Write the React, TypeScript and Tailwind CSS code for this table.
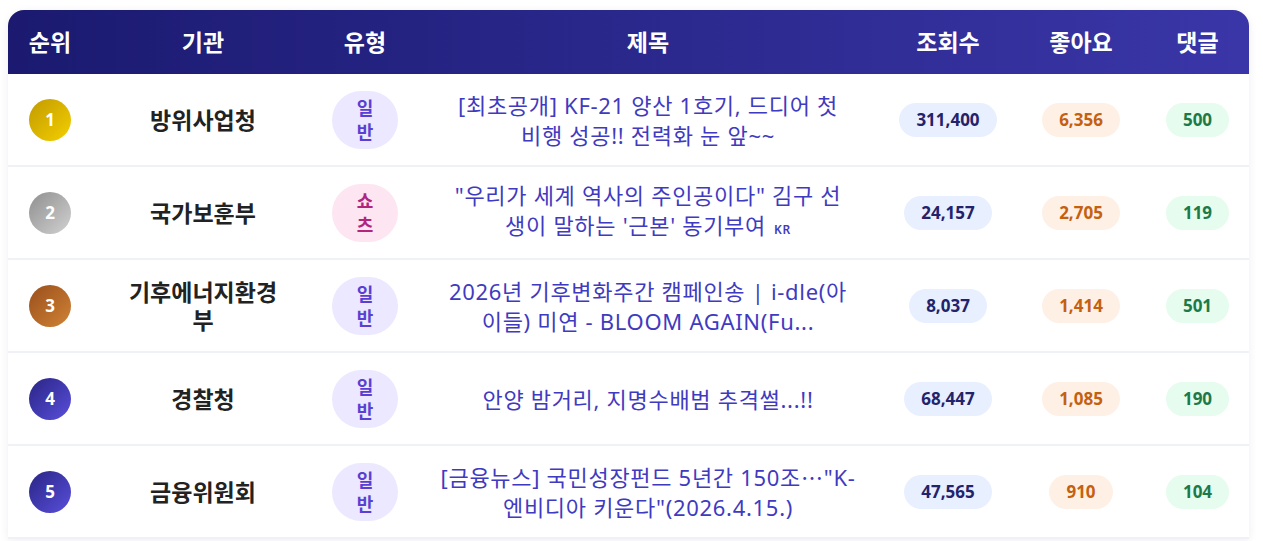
import React from "react";

type Row = {
  rank: number;
  org: string;
  type: "일반" | "쇼츠";
  title: React.ReactNode[];
  flag?: boolean;
  views: string;
  likes: string;
  comments: string;
};

// centred ellipsis, as the Korean font draws it
const Dots = () => <span className="font-['Noto_Sans_CJK_SC',sans-serif]">…</span>;

const rows: Row[] = [
  {
    rank: 1,
    org: "방위사업청",
    type: "일반",
    title: ["[최초공개] KF-21 양산 1호기, 드디어 첫", "비행 성공!! 전력화 눈 앞~~"],
    views: "311,400",
    likes: "6,356",
    comments: "500",
  },
  {
    rank: 2,
    org: "국가보훈부",
    type: "쇼츠",
    title: ["\"우리가 세계 역사의 주인공이다\" 김구 선", "생이 말하는 '근본' 동기부여"],
    flag: true,
    views: "24,157",
    likes: "2,705",
    comments: "119",
  },
  {
    rank: 3,
    org: "기후에너지환경부",
    type: "일반",
    title: ["2026년 기후변화주간 캠페인송 | i-dle(아", "이들) 미연 - BLOOM AGAIN(Fu..."],
    views: "8,037",
    likes: "1,414",
    comments: "501",
  },
  {
    rank: 4,
    org: "경찰청",
    type: "일반",
    title: ["안양 밤거리, 지명수배범 추격썰...!!"],
    views: "68,447",
    likes: "1,085",
    comments: "190",
  },
  {
    rank: 5,
    org: "금융위원회",
    type: "일반",
    title: [
      <>
        [금융뉴스] 국민성장펀드 5년간 150조
        <Dots />
        "K-
      </>,
      "엔비디아 키운다\"(2026.4.15.)",
    ],
    views: "47,565",
    likes: "910",
    comments: "104",
  },
];

const headers = ["순위", "기관", "유형", "제목", "조회수", "좋아요", "댓글"];

const cols = "grid grid-cols-[84px_222px_102px_464px_136px_130px_103px]";

// medal colours for top 3, indigo for the rest
const rankBg = (rank: number) => {
  if (rank === 1) return "bg-gradient-to-br from-[#c29a00] to-[#f3d000]";
  if (rank === 2) return "bg-gradient-to-br from-[#8f8f8f] to-[#d2d2d2]";
  if (rank === 3) return "bg-gradient-to-br from-[#9a4f1c] to-[#d08335]";
  return "bg-gradient-to-br from-[#2a2585] to-[#5a4fdc]";
};

const pill = "rounded-full px-[17px] py-[6px] text-[17px] font-bold leading-[22px]";

const App: React.FC = () => {
  return (
    <div className="min-h-screen bg-white pt-[10px] pl-2 font-['Noto_Sans','Noto_Sans_CJK_KR',sans-serif]">
      <div className="w-[1241px] rounded-t-2xl bg-white shadow-[0_2px_10px_rgba(30,30,80,0.07)]">
        {/* Header */}
        <div className={`${cols} h-[64px] items-center rounded-t-2xl bg-gradient-to-r from-[#1b1a70] to-[#3a36a8]`}>
          {headers.map((h) => (
            <div key={h} className="text-center text-[23px] font-bold text-white">
              {h}
            </div>
          ))}
        </div>

        {/* Rows */}
        {rows.map((row) => (
          <div key={row.rank} className={`${cols} h-[93px] items-center border-b-2 border-[#f0f0f7]`}>
            <div className="flex justify-center">
              <div
                className={`flex h-[42px] w-[42px] items-center justify-center rounded-full text-[17px] font-bold text-white ${rankBg(
                  row.rank
                )}`}
              >
                {row.rank}
              </div>
            </div>

            <div className="flex justify-center">
              <div className="max-w-[162px] text-center text-[23px] font-bold leading-[28px] text-[#222]">{row.org}</div>
            </div>

            <div className="flex justify-center">
              <div
                className={`flex h-[58px] w-[66px] flex-col items-center justify-center rounded-full text-[18px] font-bold leading-[24px] ${
                  row.type === "쇼츠" ? "bg-[#fde5f2] text-[#b3247c]" : "bg-[#ebe8ff] text-[#5a3fd2]"
                }`}
              >
                <span>{row.type[0]}</span>
                <span>{row.type[1]}</span>
              </div>
            </div>

            <div className="flex flex-col items-center text-[22px] leading-[30px] tracking-[0.7px] text-[#3f3bc0]">
              {row.title.map((line, i) => (
                <span key={i} className="whitespace-nowrap">
                  {line}
                  {row.flag && i === row.title.length - 1 && (
                    <span className="ml-2 text-[12px] font-semibold">KR</span>
                  )}
                </span>
              ))}
            </div>

            <div className="flex justify-center">
              <span className={`${pill} bg-[#e8efff] text-[#23226b]`}>{row.views}</span>
            </div>
            <div className="flex justify-center">
              <span className={`${pill} bg-[#fff0e6] text-[#c4600f]`}>{row.likes}</span>
            </div>
            <div className="flex justify-center">
              <span className={`${pill} bg-[#e6fcee] text-[#1d7a48]`}>{row.comments}</span>
            </div>
          </div>
        ))}
      </div>
    </div>
  );
};

export default App;
